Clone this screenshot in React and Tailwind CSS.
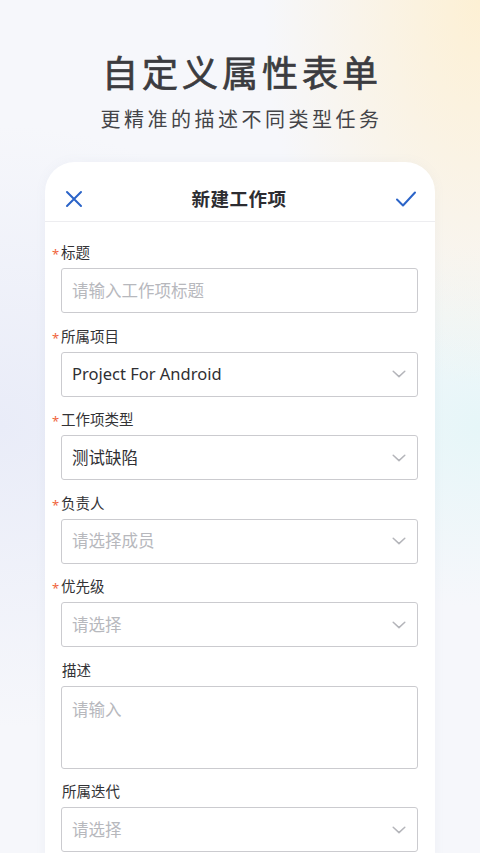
import React from "react";

const FONT = { fontFamily: "'Noto Sans', 'Noto Sans CJK SC', sans-serif" };

function Chevron() {
  return (
    <svg width="14" height="8" viewBox="0 0 14 8" fill="none" className="shrink-0 mr-[1px]">
      <path d="M1.2 1.2 L7 6.6 L12.8 1.2" stroke="#b4b5ba" strokeWidth="1.5" strokeLinecap="round" strokeLinejoin="round" />
    </svg>
  );
}

function Label({ text, required }) {
  return (
    <div className={`flex items-center h-[20px] ${required ? "ml-[-9px]" : "ml-[1px]"}`}>
      {required && (
        <span className="w-[9px] text-[13px] leading-[20px] text-[#f0643c] pt-[4px]">*</span>
      )}
      <span className="text-[14.5px] leading-[20px] text-[#333336]">{text}</span>
    </div>
  );
}

function Field({ label, required, value, placeholder, select = true, tall = false }) {
  return (
    <div className="flex flex-col mb-[12.5px]">
      <Label text={label} required={required} />
      <div
        className={`mt-[6px] border border-[#cbcbcf] rounded-[3px] bg-white flex pl-[10px] pr-[10px] ${
          tall ? "h-[83px] items-start pt-[11px]" : "h-[45px] items-center"
        }`}
      >
        <span
          className={`flex-1 text-[16.5px] leading-[24px] ${value ? "text-[#2f2f33]" : "text-[#b7b8bd]"}`}
        >
          {value || placeholder}
        </span>
        {select && <Chevron />}
      </div>
    </div>
  );
}

export default function App() {
  return (
    <div
      style={FONT}
      className="w-full h-[853px] overflow-hidden flex flex-col items-center bg-[#f6f7fb] bg-[radial-gradient(ellipse_at_100%_0%,#fdf0d4_0%,rgba(253,240,212,0)_32%),radial-gradient(ellipse_at_100%_50%,#e6f6f8_0%,rgba(230,246,248,0)_30%),radial-gradient(ellipse_at_0%_50%,#e9ecf8_0%,rgba(233,236,248,0)_50%)]"
    >
      <h1 className="mt-[52px] text-[36px] leading-[44px] font-normal tracking-[4px] text-[#3c3c40] pl-[4px] [-webkit-text-stroke:0.7px_#3c3c40]">
        自定义属性表单
      </h1>
      <p className="mt-[10px] text-[20px] leading-[28px] tracking-[3.5px] text-[#444448] pl-[3px]">
        更精准的描述不同类型任务
      </p>
      <div className="mt-[28px] w-[390px] flex-1 bg-white rounded-t-[30px] flex flex-col shadow-[0_0_12px_rgba(120,130,170,0.06)]">
        <div className="h-[60px] pt-[14px] flex items-center justify-between px-[20px] border-b border-[#ededf0]">
          <svg width="18" height="18" viewBox="0 0 18 18" fill="none">
            <path d="M2 2 L16 16 M16 2 L2 16" stroke="#2b64c8" strokeWidth="2" strokeLinecap="round" />
          </svg>
          <span className="text-[18.5px] leading-[24px] font-bold text-[#2c2c31] tracking-[0.5px]">新建工作项</span>
          <svg width="22" height="18" viewBox="0 0 22 18" fill="none" className="mr-[-2px]">
            <path d="M2 9.5 L8 15.5 L20 2.5" stroke="#2b64c8" strokeWidth="2" strokeLinecap="round" strokeLinejoin="round" />
          </svg>
        </div>
        <div className="pt-[20px] pl-[16px] pr-[17px] flex flex-col">
          <Field label="标题" required placeholder="请输入工作项标题" select={false} />
          <Field label="所属项目" required value="Project For Android" />
          <Field label="工作项类型" required value="测试缺陷" />
          <Field label="负责人" required placeholder="请选择成员" />
          <Field label="优先级" required placeholder="请选择" />
          <Field label="描述" placeholder="请输入" select={false} tall />
          <Field label="所属迭代" placeholder="请选择" />
        </div>
      </div>
    </div>
  );
}
